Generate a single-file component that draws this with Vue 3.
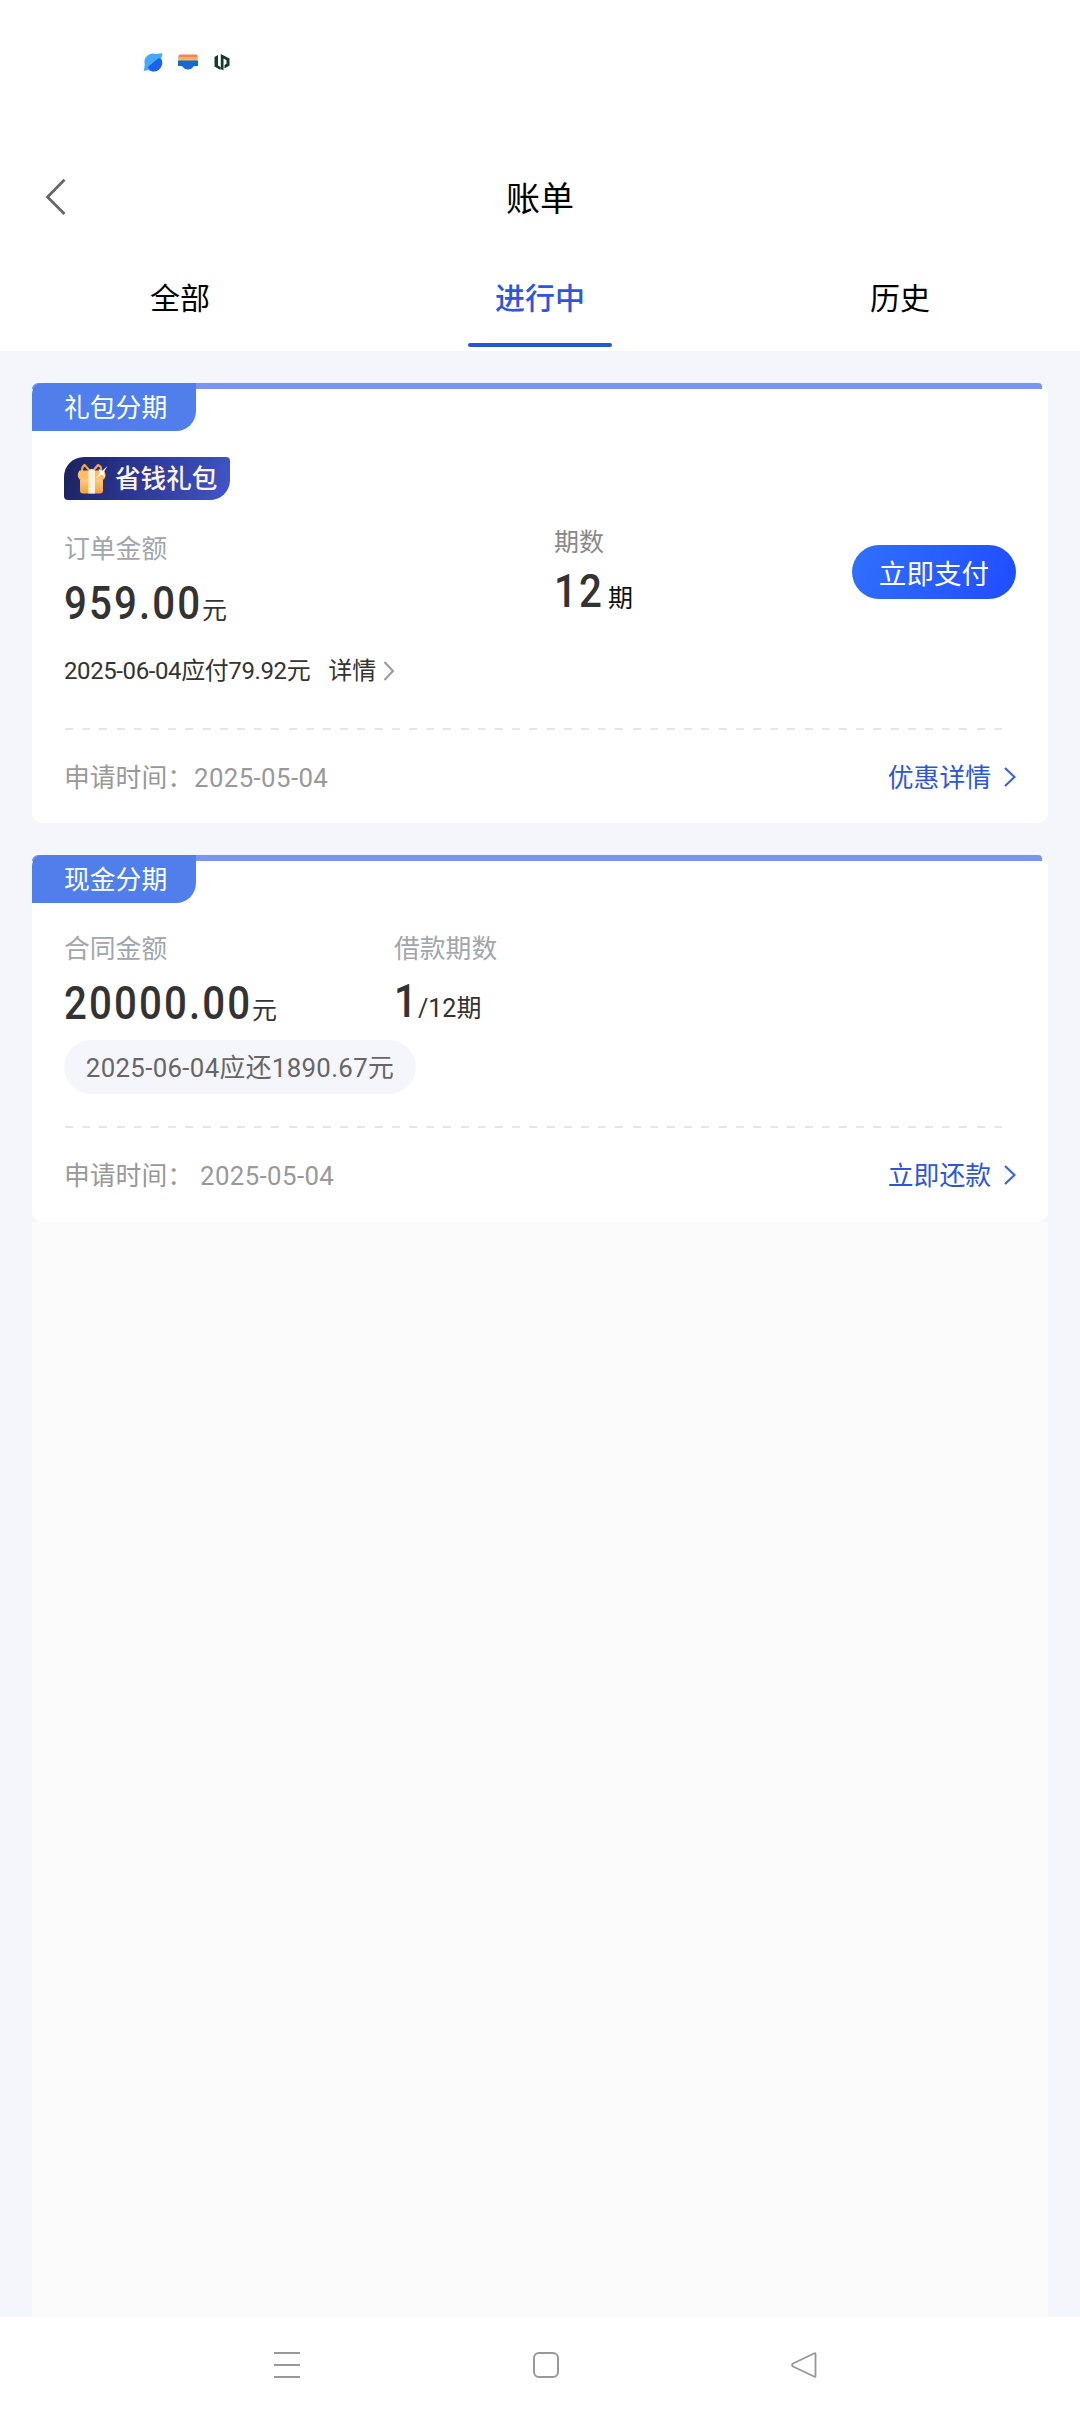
<script setup>
const tabs = [
  { label: '全部', active: false },
  { label: '进行中', active: true },
  { label: '历史', active: false },
]
</script>

<template>
  <div class="page">
    <div class="status">
      <svg width="22" height="22" viewBox="0 0 22 22">
        <rect width="22" height="22" rx="4" fill="#f8fbff" />
        <circle cx="11" cy="11" r="8.6" fill="#45a9fb" />
        <path d="M18.500 6.500 C15 7.500 13 10 10 12.500 C7.500 14.500 5.500 16 4.500 17 A8.600 8.600 0 0 0 18.600 6.800 Z" fill="#1f62ea" />
        <path d="M20.500 2.200 L13.500 3 L19 8.500 Z M1.800 20 L2.800 13.500 L8 18.800 Z" fill="#45a9fb" />
      </svg>
      <svg width="24" height="22" viewBox="0 0 24 22">
        <rect width="24" height="22" rx="4" fill="#f8fbff" />
        <path d="M4 3.500 H20 Q21.500 3.500 21.500 5 V8 H2.500 V5 Q2.500 3.500 4 3.500Z" fill="#fb8052" />
        <rect x="2.500" y="6" width="19" height="4" fill="#fbb45c" />
        <path d="M2 9.500 H22 V15 H18.500 C17 15 16.500 18.500 12 18.500 C7.500 18.500 7 15 5.500 15 H2Z" fill="#1269d3" />
      </svg>
      <svg width="18" height="22" viewBox="0 0 18 22">
        <path d="M1.500 6 L5 4 V14.500 L7.500 16 V19 L1.500 15.500Z M7.800 3 L16.500 7.500 V14.500 L11.500 17.500 V14 L13.500 12.800 V9.200 L10.500 7.600 V19.500 L7.800 18Z" fill="#123b2e" />
      </svg>
    </div>

    <header class="header">
      <svg class="back" width="24" height="40" viewBox="0 0 24 40"><path d="M20.500 2.700 L3.500 20 L20.500 37" fill="none" stroke="#666" stroke-width="2.800" /></svg>
      <h1>账单</h1>
    </header>

    <nav class="tabs">
      <div v-for="t in tabs" :key="t.label" class="tab" :class="{ active: t.active }">
        <span>{{ t.label }}</span><i></i>
      </div>
    </nav>

    <main class="body">
      <section class="card">
        <div class="bar"></div>
        <div class="tag">礼包分期</div>
        <div class="badge">
          <svg width="32" height="34" viewBox="0 0 32 34">
            <defs><linearGradient id="gold" x2="0" y2="1"><stop stop-color="#ffd08a" /><stop offset="1" stop-color="#f2a03c" /></linearGradient></defs>
            <path d="M14 9 L8.500 3 Q5.500 5 6 10 M17 9 L22 3 Q26 4 25 10" fill="none" stroke="#f4a54c" stroke-width="2.200" stroke-linejoin="round" />
            <rect x="4" y="16" width="23" height="15.500" rx="3" fill="url(#gold)" />
            <path d="M3.500 8.500 H28 Q31 13 28 17.500 H3.500 Q0 13 3.500 8.500Z" fill="#ffbd66" />
            <path d="M12.500 9 Q15.500 5 19 9 V31.500 H12.500Z" fill="#fff3df" />
            <path d="M31.500 4 L27.500 10.500 L29.500 15 L25.800 12.500 L20 16 L24 11 L22.500 7 L26 9Z" fill="#fff" />
          </svg>
          <span>省钱礼包</span>
        </div>
        <div class="order">
          <div class="col amount">
            <div class="label">订单金额</div>
            <div class="value"><b class="w6">959.00</b><em>元</em></div>
          </div>
          <div class="col terms">
            <div class="label">期数</div>
            <div class="value"><b class="w2">12</b><em>期</em></div>
          </div>
          <button class="pay">立即支付</button>
        </div>
        <div class="due">
          <span>2025-06-04应付79.92元</span>
          <span class="more">详情</span>
          <svg width="12" height="22" viewBox="0 0 12 22"><path d="M1.500 2 L10 11 L1.500 20" fill="none" stroke="#999" stroke-width="2" /></svg>
        </div>
        <div class="dash"></div>
        <div class="foot">
          <span class="k">申请时间：</span><span class="date">2025-05-04</span>
          <span class="link">优惠详情</span>
          <svg width="14" height="22" viewBox="0 0 14 22"><path d="M3 1 L12.500 10 L3 19" fill="none" stroke="#3b62e0" stroke-width="2.200" /></svg>
        </div>
      </section>

      <section class="card loan">
        <div class="bar"></div>
        <div class="tag">现金分期</div>
        <div class="order">
          <div class="col amount">
            <div class="label">合同金额</div>
            <div class="value"><b class="w8">20000.00</b><em>元</em></div>
          </div>
          <div class="col">
            <div class="label">借款期数</div>
            <div class="value one"><b class="w1">1</b><em>/12期</em></div>
          </div>
        </div>
        <div class="pill">2025-06-04应还1890.67元</div>
        <div class="dash"></div>
        <div class="foot">
          <span class="k">申请时间：</span><span class="date">2025-05-04</span>
          <span class="link">立即还款</span>
          <svg width="14" height="22" viewBox="0 0 14 22"><path d="M3 1 L12.500 10 L3 19" fill="none" stroke="#3b62e0" stroke-width="2.200" /></svg>
        </div>
      </section>
    </main>

    <footer class="nav">
      <svg width="30" height="30" viewBox="0 0 30 30"><path d="M2 3 H28 M2 15 H28 M2 27 H28" stroke="#999" stroke-width="2" /></svg>
      <svg width="30" height="30" viewBox="0 0 30 30"><rect x="3" y="3" width="24" height="24" rx="5" fill="none" stroke="#999" stroke-width="2" /></svg>
      <svg width="30" height="30" viewBox="0 0 30 30"><path d="M26.500 4 V26 Q26.500 27.500 25 26.500 L4 16.500 Q2 15 4 13.500 L25 3.500 Q26.500 2.500 26.500 4Z" fill="none" stroke="#999" stroke-width="1.800" /></svg>
    </footer>
  </div>
</template>

<style>
body { background: #fff; }
</style>

<style scoped>
* { box-sizing: border-box; }
.page {
  width: 1080px;
  height: 2412px;
  display: flex;
  flex-direction: column;
  background: #fff;
  overflow: hidden;
  font-family: Roboto, "Noto Sans CJK SC", sans-serif;
  font-weight: 400;
}
svg { display: block; flex: none; }
.status {
  height: 150px;
  padding: 51px 0 0 142px;
  display: flex;
  gap: 12px;
}
.status svg:last-child { margin-left: 1px; }
.header {
  height: 98px;
  padding: 0 44px;
  display: grid;
  grid-template-columns: 24px 1fr 24px;
  align-items: center;
}
.back { margin-bottom: 4px; }
h1 {
  margin: 0;
  font-size: 34px;
  font-weight: 400;
  line-height: 40px;
  text-align: center;
  color: #000;
}
.tabs { height: 103px; display: flex; }
.tab {
  flex: 1;
  display: flex;
  flex-direction: column;
  align-items: center;
  font-size: 30px;
  line-height: 40px;
  padding-top: 31px;
  color: #000;
}
.tab i { width: 144px; height: 4px; margin-top: 24px; border-radius: 2px; }
.tab.active { color: #2d55e2; font-weight: 500; }
.tab.active i { background: #2855d2; }
.body {
  flex: 1;
  padding: 32px 0 0;
  border: solid #f5f6fc;
  border-width: 0 32px;
  background: linear-gradient(#f5f6fc 871px, #fbfbfb 871px);
}
.card {
  height: 440px;
  margin-bottom: 32px;
  border-radius: 10px;
  background: #fff;
  padding: 0 32px;
  display: flex;
  flex-direction: column;
  align-items: flex-start;
}
.loan { height: 367px; margin: 0; }
.bar {
  align-self: stretch;
  height: 6px;
  margin: 0 -26px 0 -32px;
  border-radius: 10px 6px 0 0;
  background: #7895f2;
  flex: none;
}
.tag {
  width: 164px;
  height: 48px;
  margin: -6px 0 0 -32px;
  border-radius: 10px 0 20px 0;
  background: #507fec;
  color: #fff;
  font-size: 25.800px;
  line-height: 50px;
  padding-left: 32px;
  flex: none;
}
.badge {
  width: 166px;
  height: 43px;
  margin-top: 26px;
  padding: 5px 0 0 12px;
  border-radius: 20px 4px 20px 4px;
  background: linear-gradient(105deg, #1b215e, #2a358f 40%, #4256c8);
  color: #fdf3e4;
  display: flex;
  gap: 7px;
  font-size: 25.600px;
  font-weight: 500;
  line-height: 34px;
}
.order { display: flex; width: 952px; height: 136px; }
.amount { width: 490px; padding-top: 33px; }
.terms { width: 298px; padding-top: 26px; }
.label { color: #a1a6ad; font-size: 25.800px; line-height: 33px; height: 32px; }
.value {
  display: flex;
  align-items: baseline;
  height: 44px;
  margin-top: 16px;
  line-height: 44px;
  color: #333;
}
.value b {
  font-size: 46px;
  font-weight: 500;
  letter-spacing: 2.400px;
  transform: scaleX(.875);
  transform-origin: left;
  white-space: nowrap;
}
.w6 { width: 138px; }
.w8 { width: 188px; }
.w2 { width: 54px; }
.w1 { width: 24px; }
.value em { font-style: normal; font-size: 25px; white-space: nowrap; }
.terms .label { color: #888; font-size: 25px; }
.terms .value { margin-top: 11px; }
.terms em { color: #111; }
.pay {
  width: 164px;
  height: 54px;
  margin-top: 45px;
  border: 0;
  border-radius: 27px;
  background: linear-gradient(110deg, #3170fc, #1f4dff);
  color: #fff;
  font: 400 27.600px/56px Roboto, "Noto Sans CJK SC", sans-serif;
  padding: 2px 0 0;
}
.due {
  display: flex;
  align-items: center;
  margin-top: 17px;
  height: 36px;
  font-size: 24px;
  line-height: 36px;
  letter-spacing: -.4px;
  color: #333;
}
.more { margin: 0 7px 0 18px; letter-spacing: 0; }
.dash {
  width: 943px;
  height: 2px;
  margin-top: 39px;
  background: repeating-linear-gradient(90deg, transparent 0 1px, #e7e7e7 1px 9px, transparent 9px 17.200px);
}
.foot {
  width: 952px;
  display: flex;
  align-items: center;
  margin-top: 30px;
  height: 36px;
  font-size: 25.800px;
  line-height: 36px;
  color: #999;
}
.k { width: 130px; white-space: nowrap; }
.date { letter-spacing: .4px; }
.link { margin-left: auto; margin-right: 11px; line-height: 38px; color: #2b56d8; }
.loan .order { height: 137px; }
.loan .amount { width: 330px; }
.loan .col { padding-top: 30px; }
.loan .one { margin-top: 14px; }
.pill {
  width: 352px;
  height: 54px;
  border-radius: 27px;
  background: #f5f6fc;
  color: #666;
  font-size: 25.800px;
  line-height: 56px;
  letter-spacing: .35px;
  text-align: center;
  white-space: nowrap;
}
.loan .dash { margin-top: 32px; }
.loan .k { width: 136px; }
.nav {
  height: 95px;
  padding: 33px 261px 0 272px;
  display: flex;
  justify-content: space-between;
}
</style>
